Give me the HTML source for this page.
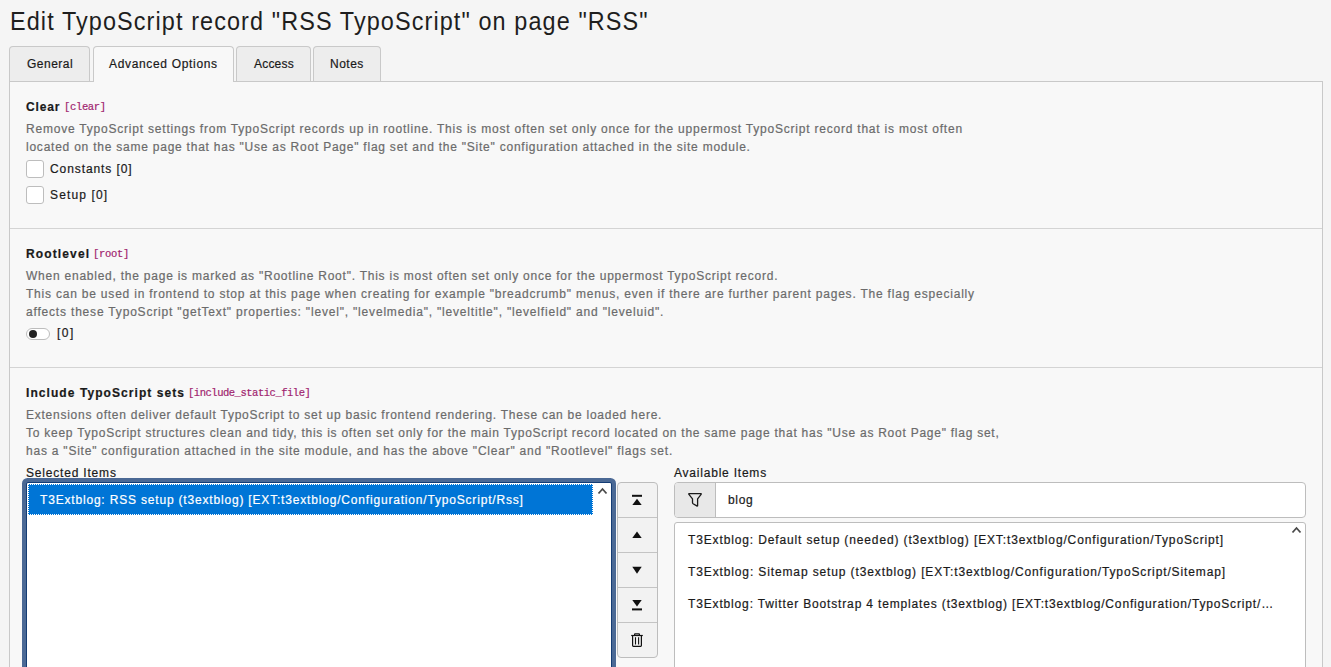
<!DOCTYPE html>
<html><head><meta charset="utf-8">
<style>
*{box-sizing:border-box;margin:0;padding:0}
html,body{width:1331px;height:667px;overflow:hidden;background:#f5f5f5;font-family:"Liberation Sans",sans-serif;color:#1a1a1a}
.abs{position:absolute;white-space:nowrap;line-height:14px}
.abs,.tab span{-webkit-text-stroke:0.2px currentColor}
h1{position:absolute;left:10px;top:3px;font-size:26px;font-weight:normal;line-height:36px;white-space:nowrap;color:#1e1e1e;transform:scaleX(0.9);transform-origin:0 0}
.tab{position:absolute;top:46px;height:35px;border:1px solid #c9c9c9;border-bottom:none;border-radius:4px 4px 0 0;background:#ededed;color:#1a1a1a}
.tab.active{background:#f8f8f8;height:36px;z-index:2}
.tab span{position:absolute;top:10px;font-size:12px;line-height:14px;white-space:nowrap}
.panel{position:absolute;left:9px;top:81px;width:1314px;height:700px;border:1px solid #c9c9c9;background:#f8f8f8}
.divider{position:absolute;left:10px;width:1312px;height:1px;background:#d4d4d4}
.lbl{font-size:12px;font-weight:bold;color:#1a1a1a}
.code{font-family:"Liberation Mono",monospace;font-size:10.5px;color:#a1246f;font-weight:normal}
.desc{font-size:12px;color:#6b6b6b}
.txt{font-size:12px;color:#1a1a1a}
.cb{position:absolute;width:18px;height:18px;border:1px solid #bdbdbd;border-radius:3px;background:#fff}
.sel{position:absolute;left:26px;top:482px;width:586px;height:300px;border:1px solid #143c74;border-radius:2px;box-shadow:0 0 0 4px #4b6995;background:#fff}
.opt{position:absolute;left:28px;top:484px;width:565px;height:31px;background:#0075d6;outline:1px dotted #fff;outline-offset:-1px}
.btns{position:absolute;left:617px;top:482px;width:41px;height:176px;border:1px solid #bdbdbd;border-radius:4px;background:#f2f2f2;overflow:hidden}
.btns div{position:absolute;left:0;width:39px;height:1px;background:#c4c4c4}
.ig{position:absolute;left:674px;top:482px;width:632px;height:36px;border:1px solid #bdbdbd;border-radius:4px;background:#fff;overflow:hidden}
.addon{position:absolute;left:0;top:0;width:41px;height:34px;background:#e8e8e8;border-right:1px solid #bdbdbd}
.avail{position:absolute;left:674px;top:522px;width:632px;height:300px;border:1px solid #bdbdbd;border-radius:3px;background:#fff}
</style></head><body>
<h1 id="title" style="letter-spacing:1.231px;">Edit TypoScript record "RSS TypoScript" on page "RSS"</h1>
<div class="panel"></div>
<div class="tab" style="left:9px;width:81px"><span id="t1" style="left:17px;letter-spacing:0.500px;">General</span></div>
<div class="tab active" style="left:93px;width:141px"><span id="t2" style="left:15px;letter-spacing:0.667px;">Advanced Options</span></div>
<div class="tab" style="left:236px;width:75px"><span id="t3" style="left:17px;letter-spacing:0.200px;">Access</span></div>
<div class="tab" style="left:313px;width:68px"><span id="t4" style="left:16px;letter-spacing:0.500px;">Notes</span></div>

<div id="l1" class="abs lbl" style="left:26px;top:100px;letter-spacing:0.875px;">Clear</div>
<div id="c1" class="abs code" style="left:64px;top:100px;letter-spacing:-0.333px;">[clear]</div>
<div id="d11" class="abs desc" style="left:26px;top:122px;letter-spacing:0.788px;">Remove TypoScript settings from TypoScript records up in rootline. This is most often set only once for the uppermost TypoScript record that is most often</div>
<div id="d12" class="abs desc" style="left:26px;top:140px;letter-spacing:0.767px;">located on the same page that has "Use as Root Page" flag set and the "Site" configuration attached in the site module.</div>
<div class="cb" style="left:26px;top:160px"></div>
<div id="cb1" class="abs txt" style="left:50px;top:162px;letter-spacing:0.908px;">Constants [0]</div>
<div class="cb" style="left:26px;top:186px"></div>
<div id="cb2" class="abs txt" style="left:50px;top:188px;letter-spacing:1.125px;">Setup [0]</div>
<div class="divider" style="top:228px"></div>

<div id="l2" class="abs lbl" style="left:26px;top:247px;letter-spacing:1.125px;">Rootlevel</div>
<div id="c2" class="abs code" style="left:93px;top:247px;letter-spacing:-0.300px;">[root]</div>
<div id="d21" class="abs desc" style="left:26px;top:269px;letter-spacing:0.764px;">When enabled, the page is marked as "Rootline Root". This is most often set only once for the uppermost TypoScript record.</div>
<div id="d22" class="abs desc" style="left:26px;top:287px;letter-spacing:0.792px;">This can be used in frontend to stop at this page when creating for example "breadcrumb" menus, even if there are further parent pages. The flag especially</div>
<div id="d23" class="abs desc" style="left:26px;top:305px;letter-spacing:0.815px;">affects these TypoScript "getText" properties: "level", "levelmedia", "leveltitle", "levelfield" and "leveluid".</div>
<div class="abs" style="left:26px;top:328px;width:24px;height:12px;border:1px solid #bdbdbd;border-radius:6px;background:#fff"></div>
<div class="abs" style="left:29px;top:330px;width:8px;height:8px;border-radius:50%;background:#222"></div>
<div id="tg" class="abs txt" style="left:57px;top:326px;letter-spacing:1.500px;">[0]</div>
<div class="divider" style="top:367px"></div>

<div id="l3" class="abs lbl" style="left:26px;top:386px;letter-spacing:1.068px;">Include TypoScript sets</div>
<div id="c3" class="abs code" style="left:188px;top:386px;letter-spacing:-0.475px;">[include_static_file]</div>
<div id="d31" class="abs desc" style="left:26px;top:408px;letter-spacing:0.745px;">Extensions often deliver default TypoScript to set up basic frontend rendering. These can be loaded here.</div>
<div id="d32" class="abs desc" style="left:26px;top:426px;letter-spacing:0.748px;">To keep TypoScript structures clean and tidy, this is often set only for the main TypoScript record located on the same page that has "Use as Root Page" flag set,</div>
<div id="d33" class="abs desc" style="left:26px;top:444px;letter-spacing:0.776px;">has a "Site" configuration attached in the site module, and has the above "Clear" and "Rootlevel" flags set.</div>
<div id="si" class="abs txt" style="left:26px;top:466px;letter-spacing:0.808px;">Selected Items</div>
<div id="ai" class="abs txt" style="left:674px;top:466px;letter-spacing:0.786px;">Available Items</div>

<div class="sel"></div>
<div class="opt"></div>
<div id="o1" class="abs" style="left:40px;top:493px;font-size:12px;color:#fff;letter-spacing:0.816px;">T3Extblog: RSS setup (t3extblog) [EXT:t3extblog/Configuration/TypoScript/Rss]</div>
<svg class="abs" style="left:596px;top:486px" width="13" height="10" viewBox="0 0 13 10"><path d="M2.5 7.5 L6.5 3 L10.5 7.5" fill="none" stroke="#4a4a4a" stroke-width="1.8"/></svg>

<div class="btns">
  <div style="top:34px"></div><div style="top:69px"></div><div style="top:104px"></div><div style="top:139px"></div>
</div>
<svg class="abs" style="left:617px;top:482px" width="41" height="176" viewBox="0 0 41 176">
  <rect x="15" y="12.8" width="10" height="2" fill="#111"/>
  <path d="M15.3 22.9 L20 16.7 L24.7 22.9 Z" fill="#111"/>
  <path d="M15.3 56.1 L20 49.4 L24.7 56.1 Z" fill="#111"/>
  <path d="M15.3 84.7 L20 91.7 L24.7 84.7 Z" fill="#111"/>
  <path d="M15.3 118 L20 124.5 L24.7 118 Z" fill="#111"/>
  <rect x="15" y="126.4" width="10" height="2" fill="#111"/>
  <g fill="none" stroke="#111" stroke-width="1">
    <path d="M14.2 153.5 H25.8" stroke-width="1.2"/>
    <path d="M17.6 153.5 V152.2 Q17.6 151.8 18 151.8 H22 Q22.4 151.8 22.4 152.2 V153.5" stroke-width="1.2"/>
    <path d="M15.6 153.5 V163.6 Q15.6 164.4 16.4 164.4 H23.6 Q24.4 164.4 24.4 163.6 V153.5" stroke-width="1.2"/>
    <path d="M18.5 155.2 V162.4 M21.6 155.2 V162.4" stroke-width="1.1"/>
  </g>
</svg>

<div class="ig"><div class="addon"></div></div>
<svg class="abs" style="left:674px;top:482px" width="42" height="36" viewBox="0 0 42 36">
  <path d="M15.2 11.6 H26.8 Q27.7 11.6 27.1 12.4 L23.6 16.8 V23.4 Q23.6 24.4 22.8 23.9 L19.1 21.7 Q18.5 21.3 18.5 20.6 V16.8 L14.9 12.4 Q14.3 11.6 15.2 11.6 Z" fill="none" stroke="#1a1a1a" stroke-width="1.3" stroke-linejoin="round"/>
</svg>
<div id="blog" class="abs txt" style="left:728px;top:493px;letter-spacing:0.667px;">blog</div>

<div class="avail"></div>
<div id="a1" class="abs txt" style="left:688px;top:533px;letter-spacing:0.865px;">T3Extblog: Default setup (needed) (t3extblog) [EXT:t3extblog/Configuration/TypoScript]</div>
<div id="a2" class="abs txt" style="left:688px;top:565px;letter-spacing:0.875px;">T3Extblog: Sitemap setup (t3extblog) [EXT:t3extblog/Configuration/TypoScript/Sitemap]</div>
<div id="a3" class="abs txt" style="left:688px;top:597px;letter-spacing:0.844px;">T3Extblog: Twitter Bootstrap 4 templates (t3extblog) [EXT:t3extblog/Configuration/TypoScript/…</div>
<svg class="abs" style="left:1290px;top:525px" width="13" height="10" viewBox="0 0 13 10"><path d="M2.5 7.5 L6.5 3 L10.5 7.5" fill="none" stroke="#4a4a4a" stroke-width="1.8"/></svg>
</body></html>
